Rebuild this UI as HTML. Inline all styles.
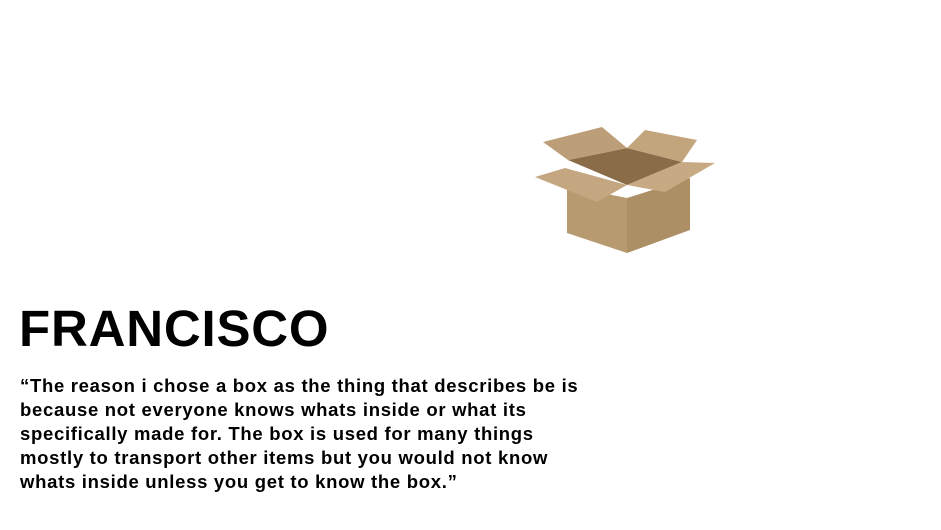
<!DOCTYPE html>
<html><head><style>
body{margin:0;width:941px;height:530px;background:#fff;position:relative;overflow:hidden;font-family:"Liberation Sans",Arial,sans-serif;}
h1{position:absolute;left:19px;top:299px;margin:0;font-size:51px;font-weight:bold;line-height:60px;letter-spacing:0.8px;color:#000;}
p{position:absolute;left:20px;top:374px;margin:0;font-size:18.5px;font-weight:bold;line-height:24px;letter-spacing:0.7px;color:#000;white-space:nowrap;}
svg{position:absolute;left:0;top:0}
</style></head><body>
<svg width="941" height="530">
<polygon points="568,160 627,148 682,162 627,185" fill="#8a6d48"/>
<polygon points="543,142 602,127 627,148 568,160" fill="#bc9f78"/>
<polygon points="627,148 645,130 697,140 682,162" fill="#c2a47d"/>
<polygon points="567,186 627,198 627,253 567,233" fill="#b89a70"/>
<polygon points="627,198 690,178 690,230 627,253" fill="#ad8f66"/>
<polygon points="535,177 565,168 627,185 597,202" fill="#c4a780"/>
<polygon points="627,185 682,162 715,163 665,192" fill="#c7aa83"/>
</svg>
<h1>FRANCISCO</h1>
<p>“The reason i chose a box as the thing that describes be is<br>because not everyone knows whats inside or what its<br>specifically made for. The box is used for many things<br>mostly to transport other items but you would not know<br>whats inside unless you get to know the box.”</p>
</body></html>
